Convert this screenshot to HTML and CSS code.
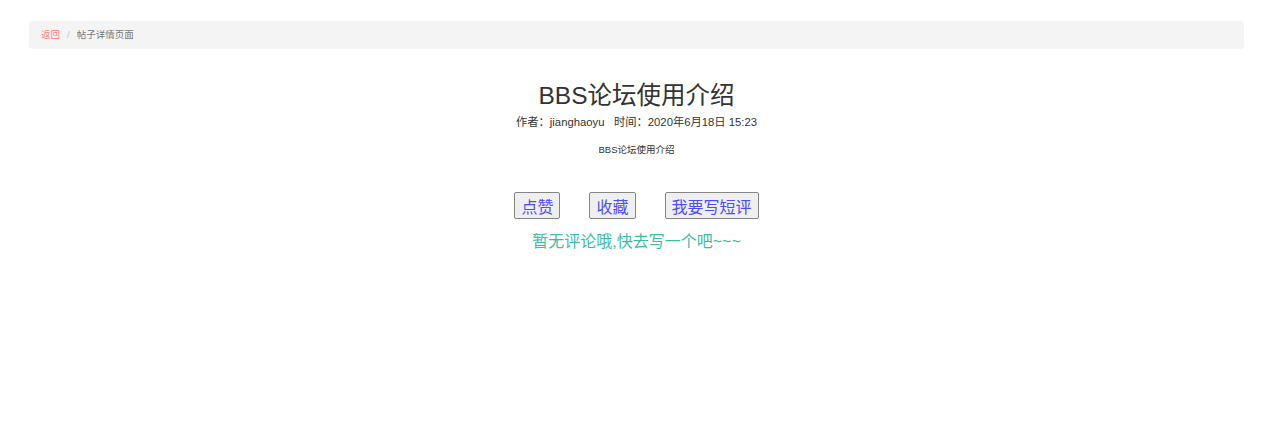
FILE: index.html
```html
<!DOCTYPE html>
<html lang="zh-CN">
<head>
<meta charset="utf-8">
<title>帖子详情页面</title>
<link rel="stylesheet" href="styles.css">
</head>
<body>
<div class="page">
  <ol class="breadcrumb">
    <li><a class="back" href="#">返回</a></li>
    <li class="sep">/</li>
    <li class="current">帖子详情页面</li>
  </ol>
  <div class="post">
    <h2 class="title">BBS论坛使用介绍</h2>
    <div class="meta">作者：jianghaoyu&nbsp;&nbsp;&nbsp;时间：2020年6月18日 15:23</div>
    <div class="content">BBS论坛使用介绍</div>
    <div class="actions">
      <button class="btn">点赞</button>
      <button class="btn">收藏</button>
      <button class="btn">我要写短评</button>
    </div>
    <div class="empty">暂无评论哦,快去写一个吧~~~</div>
  </div>
</div>
</body>
</html>
```
FILE: styles.css
```css
html, body {
  margin: 0;
  padding: 0;
  background: #fff;
}
body {
  font-family: "Liberation Sans", "Noto Sans CJK SC", sans-serif;
  color: #333;
}
.page {
  padding: 21px 25px 0 29px;
}
.breadcrumb {
  list-style: none;
  margin: 0;
  height: 28px;
  padding: 0 12px;
  background: #f4f4f4;
  border-radius: 4px;
  display: flex;
  align-items: center;
  gap: 7px;
  font-size: 9.5px;
}
.breadcrumb li {
  line-height: 28px;
}
.back {
  color: #ff7b7b;
  text-decoration: none;
}
.sep {
  color: #c8c8c8;
}
.current {
  color: #777;
}
.post {
  display: flex;
  flex-direction: column;
  align-items: center;
}
.title {
  margin: 31px 0 0;
  font-size: 24.5px;
  font-weight: 400;
  line-height: 31px;
  color: #333;
}
.meta {
  margin-top: 3px;
  font-size: 11.3px;
  font-weight: 400;
  line-height: 16px;
  color: #333;
}
.content {
  margin-top: 13px;
  font-size: 9.5px;
  line-height: 14px;
  color: #333;
}
.actions {
  display: flex;
  gap: 29px;
  margin-top: 35px;
}
.btn {
  font-family: "Liberation Sans", "Noto Sans CJK SC", sans-serif;
  font-size: 16px;
  height: 27px;
  padding: 0 6px;
  color: #4d4df5;
  background: #efefef;
  border: 1px solid #858585;
  border-radius: 2px;
}
.empty {
  margin-top: 13px;
  font-size: 16px;
  line-height: 20px;
  color: #3dbc9f;
}
```
